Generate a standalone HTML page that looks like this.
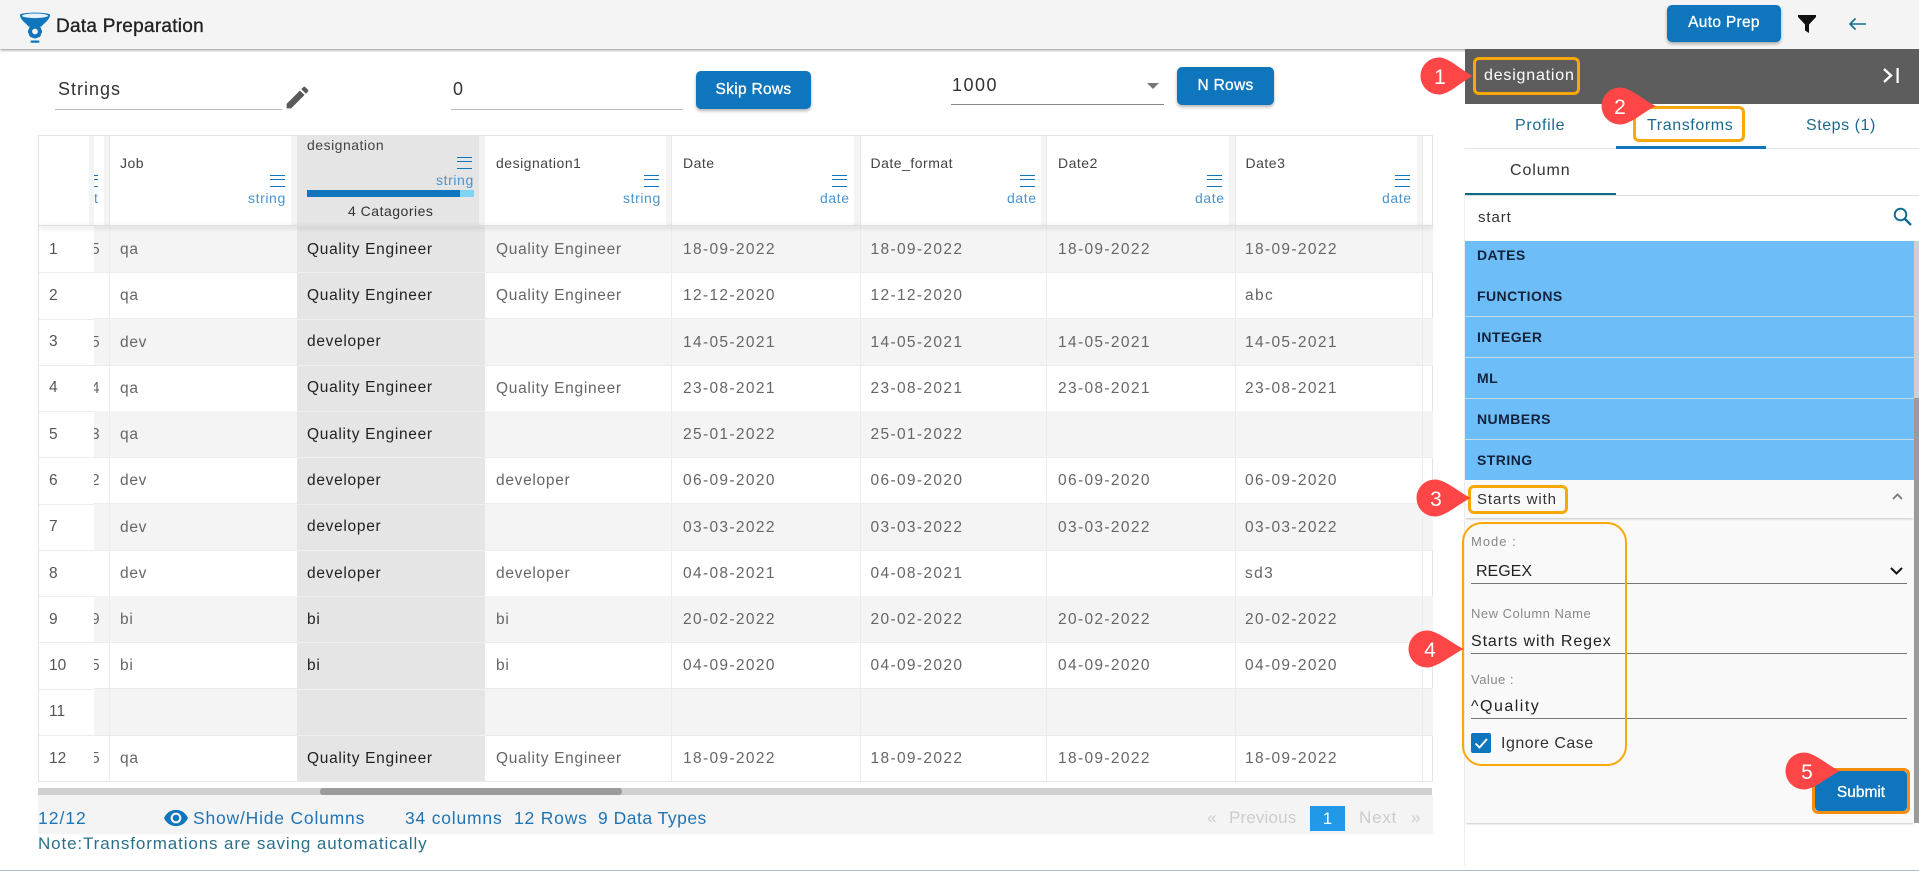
<!DOCTYPE html>
<html><head><meta charset="utf-8"><title>Data Preparation</title>
<style>
html,body{margin:0;padding:0;background:#fff}
body{width:1919px;height:871px;position:relative;overflow:hidden;font-family:"Liberation Sans",sans-serif;color:#333}
.a{position:absolute}
.t{position:absolute;white-space:nowrap;line-height:20px}
.btn{position:absolute;background:#0f75bc;color:#fff;border-radius:5px;text-align:center;font-weight:400;font-size:15.5px;letter-spacing:.3px;-webkit-text-stroke:.3px #fff;box-shadow:0 2px 3px rgba(0,0,0,.3)}
.r{position:absolute;left:94px;width:1339px;height:46px;border-bottom:1px solid #ececec;box-sizing:content-box}
.r.o{background:#f4f4f4}
.r i{position:absolute;top:0;width:1px;height:46px;background:#ececec}
.r b{position:absolute;font-weight:400;top:1px;line-height:46px;font-size:15.5px;letter-spacing:.7px;color:#666;white-space:nowrap}
.r b.d{letter-spacing:1.35px}
.r b.f{left:-3px;color:#666}
.c0{left:26px}.c2{left:402px}.c3{left:589px}.c4{left:776.5px}.c5{left:964px}.c6{left:1151px}
.idx{position:absolute;left:49px;font-size:15.5px;color:#555;line-height:20px}
.des{position:absolute;left:297px;width:188px;background:#e5e5e5}
.hstrip{position:absolute;top:136px;height:90px;background:#f4f4f4}
.hn{position:absolute;top:153px;font-size:14px;line-height:20px;color:#444;letter-spacing:.5px;white-space:nowrap}
.ty{position:absolute;top:188px;font-size:14px;line-height:20px;color:#4a94cf;letter-spacing:.6px;text-align:right;white-space:nowrap}
.m{position:absolute;width:15px;height:10px;border-top:1.3px solid #0f75bc;border-bottom:1.3px solid #0f75bc}
.m:after{content:"";position:absolute;left:0;right:0;top:3.7px;height:1.3px;background:#0f75bc}
.li{position:absolute;left:1465px;width:449px;background:#6cbdf8;height:40px;border-bottom:1px solid #c9dbe8}
.li span{position:absolute;left:12px;font-size:14px;font-weight:700;letter-spacing:.45px;color:#13223a;line-height:20px}
.lab{position:absolute;left:1471px;font-size:13px;color:#888;line-height:16px;letter-spacing:.5px;white-space:nowrap}
.val{position:absolute;left:1471px;font-size:16px;color:#222;line-height:20px;letter-spacing:.9px;white-space:nowrap}
.ul{position:absolute;left:1471px;width:436px;height:1.5px;background:#777}
.f{position:absolute;font-size:17.5px;line-height:22px;color:#1f74b5;letter-spacing:.8px;white-space:nowrap;top:807px}
.p{position:absolute;font-size:17px;line-height:22px;color:#ccc;letter-spacing:.8px;top:807px;white-space:nowrap}
.ob{position:absolute;border:3px solid #f9a80a;border-radius:6px;box-sizing:border-box}
.mk{position:absolute;width:60px;height:40px;overflow:visible}
.mk text{font-family:"Liberation Sans",sans-serif;font-size:21px;fill:#fff;text-anchor:middle}
.sep{position:absolute;left:39px;width:55px;height:1px;background:#ececec}
.ds{position:absolute;left:297px;width:188px;height:1px;background:#efefef}
.dt{position:absolute;left:307px;font-size:15.5px;letter-spacing:.7px;color:#222;line-height:20px;white-space:nowrap}
</style></head><body>

<!-- top header -->
<div class="a" style="left:0;top:0;width:1919px;height:49px;background:#f4f4f4;box-shadow:0 1px 3px rgba(0,0,0,.45)"></div>
<svg class="a" style="left:18px;top:11px" width="34" height="34" viewBox="0 0 34 34">
<path d="M2 3.5C2 9 8 12 10.500 15.500L23.500 15.500C26 12 32 9 32 3.500C28 1 6 1 2 3.500Z" fill="#0f75bc"/>
<ellipse cx="17" cy="4.800" rx="13" ry="2.300" fill="#e8f2fa"/>
<circle cx="17" cy="20.500" r="4.800" fill="none" stroke="#0f75bc" stroke-width="3.800"/>
<path d="M17 13.500v3M17 24.500v3M10 20.500h3M21 20.500h3M12 15.500l2 2M20 23.500l2 2M22 15.500l-2 2M14 23.500l-2 2" stroke="#0f75bc" stroke-width="2.400"/>
<rect x="12.500" y="29.500" width="9" height="2.300" rx="1" fill="#0f75bc"/>
</svg>
<div class="t" style="left:56px;top:17px;font-size:19px;letter-spacing:.27px;color:#222;-webkit-text-stroke:.35px #222">Data Preparation</div>
<div class="btn" style="left:1667px;top:5px;width:114px;height:37px;line-height:36px;">Auto Prep</div>
<svg class="a" style="left:1798px;top:15px" width="18" height="18" viewBox="0 0 18 18"><path d="M0 0H18V2L11 9.500V18L7 15.500V9.500L0 2Z" fill="#111"/></svg>
<svg class="a" style="left:1848px;top:17px" width="19" height="14" viewBox="0 0 19 14"><path d="M18 7H2M7.500 1.500L2 7L7.500 12.500" fill="none" stroke="#0f6f8f" stroke-width="1.600"/></svg>

<!-- controls -->
<div class="t" style="left:58px;top:79px;font-size:18px;letter-spacing:1px;color:#333">Strings</div>
<div class="a" style="left:55px;top:108.500px;width:227px;height:1px;background:#bbb"></div>
<svg class="a" style="left:283px;top:83px" width="29" height="29" viewBox="0 0 24 24"><path d="M3 17.250V21h3.750L17.810 9.940l-3.750-3.750L3 17.250zM20.710 7.040c.39-.39.39-1.020 0-1.410l-2.340-2.340c-.39-.39-1.020-.39-1.410 0l-1.830 1.830 3.750 3.750 1.830-1.830z" fill="#5a5a5a"/></svg>
<div class="t" style="left:453px;top:79px;font-size:18px;color:#333">0</div>
<div class="a" style="left:451px;top:108.500px;width:232px;height:1px;background:#bbb"></div>
<div class="btn" style="left:696px;top:71px;width:115px;height:38px;line-height:38px">Skip Rows</div>
<div class="t" style="left:952px;top:75px;font-size:18px;letter-spacing:1.500px;color:#333">1000</div>
<div class="a" style="left:951px;top:104px;width:213px;height:1px;background:#888"></div>
<svg class="a" style="left:1147px;top:83px" width="12" height="6" viewBox="0 0 12 6"><path d="M0 0H12L6 6Z" fill="#757575"/></svg>
<div class="btn" style="left:1177px;top:67px;width:97px;height:38px;line-height:38px">N Rows</div>

<!-- table frame -->
<div class="a" style="left:38px;top:135px;width:1395px;height:647px;box-sizing:border-box;border:1px solid #e4e4e4;border-bottom:0"></div>

<!-- rows -->
<div class="r o" style="top:226px"><b class="f">5</b><i style="left:15px"></i><b class="c0">qa</b><b class="c2">Quality Engineer</b><i style="left:577px"></i><b class="d c3">18-09-2022</b><i style="left:766px"></i><b class="d c4">18-09-2022</b><i style="left:952px"></i><b class="d c5">18-09-2022</b><i style="left:1141px"></i><b class="d c6">18-09-2022</b><i style="left:1328px"></i></div>
<div class="r" style="top:272.250px"><i style="left:15px"></i><b class="c0">qa</b><b class="c2">Quality Engineer</b><i style="left:577px"></i><b class="d c3">12-12-2020</b><i style="left:766px"></i><b class="d c4">12-12-2020</b><i style="left:952px"></i><i style="left:1141px"></i><b class="d c6">abc</b><i style="left:1328px"></i></div>
<div class="r o" style="top:318.500px"><b class="f">5</b><i style="left:15px"></i><b class="c0">dev</b><i style="left:577px"></i><b class="d c3">14-05-2021</b><i style="left:766px"></i><b class="d c4">14-05-2021</b><i style="left:952px"></i><b class="d c5">14-05-2021</b><i style="left:1141px"></i><b class="d c6">14-05-2021</b><i style="left:1328px"></i></div>
<div class="r" style="top:364.750px"><b class="f">4</b><i style="left:15px"></i><b class="c0">qa</b><b class="c2">Quality Engineer</b><i style="left:577px"></i><b class="d c3">23-08-2021</b><i style="left:766px"></i><b class="d c4">23-08-2021</b><i style="left:952px"></i><b class="d c5">23-08-2021</b><i style="left:1141px"></i><b class="d c6">23-08-2021</b><i style="left:1328px"></i></div>
<div class="r o" style="top:411px"><b class="f">3</b><i style="left:15px"></i><b class="c0">qa</b><i style="left:577px"></i><b class="d c3">25-01-2022</b><i style="left:766px"></i><b class="d c4">25-01-2022</b><i style="left:952px"></i><i style="left:1141px"></i><i style="left:1328px"></i></div>
<div class="r" style="top:457.250px"><b class="f">2</b><i style="left:15px"></i><b class="c0">dev</b><b class="c2">developer</b><i style="left:577px"></i><b class="d c3">06-09-2020</b><i style="left:766px"></i><b class="d c4">06-09-2020</b><i style="left:952px"></i><b class="d c5">06-09-2020</b><i style="left:1141px"></i><b class="d c6">06-09-2020</b><i style="left:1328px"></i></div>
<div class="r o" style="top:503.500px"><i style="left:15px"></i><b class="c0">dev</b><i style="left:577px"></i><b class="d c3">03-03-2022</b><i style="left:766px"></i><b class="d c4">03-03-2022</b><i style="left:952px"></i><b class="d c5">03-03-2022</b><i style="left:1141px"></i><b class="d c6">03-03-2022</b><i style="left:1328px"></i></div>
<div class="r" style="top:549.750px"><i style="left:15px"></i><b class="c0">dev</b><b class="c2">developer</b><i style="left:577px"></i><b class="d c3">04-08-2021</b><i style="left:766px"></i><b class="d c4">04-08-2021</b><i style="left:952px"></i><i style="left:1141px"></i><b class="d c6">sd3</b><i style="left:1328px"></i></div>
<div class="r o" style="top:596px"><b class="f">9</b><i style="left:15px"></i><b class="c0">bi</b><b class="c2">bi</b><i style="left:577px"></i><b class="d c3">20-02-2022</b><i style="left:766px"></i><b class="d c4">20-02-2022</b><i style="left:952px"></i><b class="d c5">20-02-2022</b><i style="left:1141px"></i><b class="d c6">20-02-2022</b><i style="left:1328px"></i></div>
<div class="r" style="top:642.250px"><b class="f">5</b><i style="left:15px"></i><b class="c0">bi</b><b class="c2">bi</b><i style="left:577px"></i><b class="d c3">04-09-2020</b><i style="left:766px"></i><b class="d c4">04-09-2020</b><i style="left:952px"></i><b class="d c5">04-09-2020</b><i style="left:1141px"></i><b class="d c6">04-09-2020</b><i style="left:1328px"></i></div>
<div class="r o" style="top:688.500px"><i style="left:15px"></i><i style="left:577px"></i><i style="left:766px"></i><i style="left:952px"></i><i style="left:1141px"></i><i style="left:1328px"></i></div>
<div class="r" style="top:734.750px"><b class="f">5</b><i style="left:15px"></i><b class="c0">qa</b><b class="c2">Quality Engineer</b><i style="left:577px"></i><b class="d c3">18-09-2022</b><i style="left:766px"></i><b class="d c4">18-09-2022</b><i style="left:952px"></i><b class="d c5">18-09-2022</b><i style="left:1141px"></i><b class="d c6">18-09-2022</b><i style="left:1328px"></i></div>
<div class="a" style="left:38px;top:781px;width:1395px;height:1px;background:#e8e8e8"></div>

<!-- index column cover -->
<div class="a" style="left:39px;top:226px;width:55px;height:555px;background:#fff"></div>
<div class="sep" style="top:272px"></div><div class="sep" style="top:318.500px"></div><div class="sep" style="top:364.500px"></div><div class="sep" style="top:411px"></div><div class="sep" style="top:457px"></div><div class="sep" style="top:503.500px"></div><div class="sep" style="top:549.500px"></div><div class="sep" style="top:596px"></div><div class="sep" style="top:642px"></div><div class="sep" style="top:688.500px"></div><div class="sep" style="top:734.500px"></div>
<div class="idx" style="top:240px">1</div><div class="idx" style="top:286px">2</div><div class="idx" style="top:332px">3</div><div class="idx" style="top:378px">4</div><div class="idx" style="top:425px">5</div><div class="idx" style="top:471px">6</div><div class="idx" style="top:517px">7</div><div class="idx" style="top:564px">8</div><div class="idx" style="top:610px">9</div><div class="idx" style="top:656px">10</div><div class="idx" style="top:702px">11</div><div class="idx" style="top:749px">12</div>

<!-- designation column -->
<div class="des" style="top:136px;height:645px"></div>
<div class="ds" style="top:272px"></div><div class="ds" style="top:318.500px"></div><div class="ds" style="top:364.500px"></div><div class="ds" style="top:411px"></div><div class="ds" style="top:457px"></div><div class="ds" style="top:503.500px"></div><div class="ds" style="top:549.500px"></div><div class="ds" style="top:596px"></div><div class="ds" style="top:642px"></div><div class="ds" style="top:688.500px"></div><div class="ds" style="top:734.500px"></div>
<div class="dt" style="top:240px">Quality Engineer</div>
<div class="dt" style="top:286px">Quality Engineer</div>
<div class="dt" style="top:332px">developer</div>
<div class="dt" style="top:378px">Quality Engineer</div>
<div class="dt" style="top:425px">Quality Engineer</div>
<div class="dt" style="top:471px">developer</div>
<div class="dt" style="top:517px">developer</div>
<div class="dt" style="top:564px">developer</div>
<div class="dt" style="top:610px">bi</div>
<div class="dt" style="top:656px">bi</div>
<div class="dt" style="top:749px">Quality Engineer</div>

<!-- header cells -->
<div class="a" style="left:39px;top:136px;width:1393px;height:90px;background:#fff"></div>
<div class="hstrip" style="left:89px;width:5px"></div>
<div class="hstrip" style="left:104px;width:5px"></div>
<div class="a" style="left:109px;top:136px;width:1px;height:90px;background:#e8e8e8"></div>
<div class="hstrip" style="left:291px;width:6px"></div>
<div class="a" style="left:297px;top:136px;width:188px;height:90px;background:#e5e5e5"></div>
<div class="hstrip" style="left:479px;width:6px;background:#f1f1f1"></div>
<div class="hstrip" style="left:666px;width:5px"></div>
<div class="hstrip" style="left:854px;width:6px"></div>
<div class="hstrip" style="left:1041px;width:5px"></div>
<div class="hstrip" style="left:1229px;width:6px"></div>
<div class="hstrip" style="left:1417px;width:5px"></div>
<div class="a" style="left:671px;top:136px;width:1px;height:90px;background:#e8e8e8"></div>
<div class="a" style="left:860px;top:136px;width:1px;height:90px;background:#e8e8e8"></div>
<div class="a" style="left:1046px;top:136px;width:1px;height:90px;background:#e8e8e8"></div>
<div class="a" style="left:1235px;top:136px;width:1px;height:90px;background:#e8e8e8"></div>
<div class="a" style="left:1422px;top:136px;width:1px;height:90px;background:#e8e8e8"></div>
<!-- clipped col -->
<div class="a" style="left:94px;top:174.500px;width:3.500px;height:10px;border-top:1.300px solid #0f75bc;border-bottom:1.300px solid #0f75bc"></div>
<div class="a" style="left:94px;top:179px;width:3.500px;height:1.300px;background:#0f75bc"></div>
<div class="t" style="left:94px;top:188px;font-size:14px;color:#4a94cf">t</div>

<div class="hn" style="left:120px">Job</div>
<div class="m" style="left:270px;top:174.500px"></div>
<div class="ty" style="left:248px">string</div>

<div class="hn" style="left:307px;top:135px">designation</div>
<div class="m" style="left:457px;top:156.500px"></div>
<div class="ty" style="left:436px;top:170px">string</div>
<div class="a" style="left:307px;top:190px;width:153px;height:7px;background:#0f75bc"></div>
<div class="a" style="left:460px;top:190px;width:14px;height:7px;background:#7fd3f7"></div>
<div class="t" style="left:348px;top:201px;font-size:14px;letter-spacing:.5px;color:#333">4 Catagories</div>

<div class="hn" style="left:496px">designation1</div>
<div class="m" style="left:644px;top:174.500px"></div>
<div class="ty" style="left:623px">string</div>

<div class="hn" style="left:683px">Date</div>
<div class="m" style="left:832px;top:174.500px"></div>
<div class="ty" style="left:820px">date</div>

<div class="hn" style="left:870.500px">Date_format</div>
<div class="m" style="left:1019.500px;top:174.500px"></div>
<div class="ty" style="left:1007px">date</div>

<div class="hn" style="left:1058px">Date2</div>
<div class="m" style="left:1207px;top:174.500px"></div>
<div class="ty" style="left:1195px">date</div>

<div class="hn" style="left:1245.500px">Date3</div>
<div class="m" style="left:1395px;top:174.500px"></div>
<div class="ty" style="left:1382px">date</div>

<div class="a" style="left:39px;top:225px;width:1394px;height:1px;background:#ddd;box-shadow:0 2px 4px rgba(0,0,0,.28)"></div>

<!-- scrollbar -->
<div class="a" style="left:38px;top:788px;width:1394px;height:7px;background:#d0d0d0"></div>
<div class="a" style="left:320px;top:788px;width:302px;height:7px;background:#9b9b9b;border-radius:3px"></div>

<!-- footer -->
<div class="a" style="left:38px;top:795px;width:1395px;height:39px;background:#f4f4f4"></div>
<div class="f" style="left:38px;letter-spacing:1px">12/12</div>
<svg class="a" style="left:163px;top:805px" width="26" height="26" viewBox="0 0 24 24"><path d="M12 4.500C7 4.500 2.730 7.610 1 12c1.730 4.390 6 7.500 11 7.500s9.270-3.110 11-7.500c-1.730-4.390-6-7.500-11-7.500zM12 17c-2.760 0-5-2.240-5-5s2.240-5 5-5 5 2.240 5 5-2.240 5-5 5zm0-8c-1.660 0-3 1.340-3 3s1.340 3 3 3 3-1.340 3-3-1.340-3-3-3z" fill="#0f75bc"/></svg>
<div class="f" style="left:193px">Show/Hide Columns</div>
<div class="f" style="left:405px">34 columns</div>
<div class="f" style="left:514px">12 Rows</div>
<div class="f" style="left:598px;letter-spacing:.5px">9 Data Types</div>
<div class="p" style="left:1207px">«</div>
<div class="p" style="left:1229px;letter-spacing:.15px">Previous</div>
<div class="a" style="left:1310px;top:806px;width:35px;height:25px;background:#2299e8;color:#fff;text-align:center;line-height:25px;font-size:17px">1</div>
<div class="p" style="left:1359px">Next</div>
<div class="p" style="left:1411px">»</div>
<div class="t" style="left:38px;top:833px;font-size:17px;line-height:22px;letter-spacing:.88px;color:#2b6f8a">Note:Transformations are saving automatically</div>
<div class="a" style="left:0;top:870px;width:1919px;height:1px;background:#a3bfbf"></div>

<!-- right panel -->
<div class="a" style="left:1464px;top:195px;width:1px;height:671px;background:#eee"></div>
<div class="a" style="left:1465px;top:49px;width:454px;height:55px;background:#5d5d5d"></div>
<div class="t" style="left:1484px;top:66px;font-size:16px;letter-spacing:.8px;color:#fff">designation</div>
<svg class="a" style="left:1882px;top:67px" width="18" height="17" viewBox="0 0 18 17"><path d="M2 2L9 8.500L2 15" fill="none" stroke="#fff" stroke-width="2.400"/><rect x="14.500" y="1" width="2.200" height="15" fill="#fff"/></svg>
<div class="t" style="left:1515px;top:116px;font-size:16px;letter-spacing:.7px;color:#1d6a8c">Profile</div>
<div class="t" style="left:1647px;top:116px;font-size:16px;letter-spacing:.6px;color:#1d6a8c">Transforms</div>
<div class="t" style="left:1806px;top:116px;font-size:16px;letter-spacing:.55px;color:#1d6a8c">Steps (1)</div>
<div class="a" style="left:1465px;top:148px;width:454px;height:1px;background:#e5e5e5"></div>
<div class="a" style="left:1615.500px;top:146px;width:150.500px;height:3px;background:#0f75bc"></div>
<div class="t" style="left:1510px;top:161px;font-size:16px;letter-spacing:.9px;color:#333">Column</div>
<div class="a" style="left:1465px;top:194.500px;width:454px;height:1px;background:#ddd"></div>
<div class="a" style="left:1465px;top:193px;width:150.500px;height:2px;background:#0d6a8a"></div>
<div class="t" style="left:1478px;top:208px;font-size:15px;letter-spacing:.9px;color:#333">start</div>
<svg class="a" style="left:1893px;top:207px" width="19" height="19" viewBox="0 0 19 19"><circle cx="7.500" cy="7.500" r="5.800" fill="none" stroke="#0d6a8a" stroke-width="1.900"/><path d="M12 12L18 18" stroke="#0d6a8a" stroke-width="2.300"/></svg>

<div class="li" style="top:241px;height:33.500px"><span style="top:4px">DATES</span></div>
<div class="li" style="top:275px;height:40.500px"><span style="top:11px">FUNCTIONS</span></div>
<div class="li" style="top:316.500px;height:40px"><span style="top:10.500px">INTEGER</span></div>
<div class="li" style="top:357.500px;height:40px"><span style="top:10.500px">ML</span></div>
<div class="li" style="top:398.500px;height:40px"><span style="top:10.500px">NUMBERS</span></div>
<div class="li" style="top:439.500px;height:40px"><span style="top:10.500px">STRING</span></div>
<div class="a" style="left:1914px;top:241px;width:5px;height:157px;background:#cfcfcf"></div>
<div class="a" style="left:1914px;top:398px;width:5px;height:425px;background:#9b9b9b"></div>

<div class="a" style="left:1465px;top:518px;width:449px;height:305px;background:#f9f9f9;box-shadow:0 2px 2px -1px rgba(0,0,0,.2)"></div>
<div class="a" style="left:1465px;top:480px;width:449px;height:38px;background:#f9f9f9;box-shadow:0 2px 2px -1px rgba(0,0,0,.22)"></div>
<div class="t" style="left:1477px;top:490px;font-size:15px;letter-spacing:.9px;color:#333">Starts with</div>
<svg class="a" style="left:1892px;top:493px" width="11" height="7" viewBox="0 0 11 7"><path d="M1 6L5.500 1.500L10 6" fill="none" stroke="#777" stroke-width="1.800"/></svg>

<div class="lab" style="left:1471px;top:534px;letter-spacing:1px">Mode :</div>
<div class="val" style="left:1476px;top:562px;letter-spacing:0">REGEX</div>
<svg class="a" style="left:1890px;top:567px" width="13" height="8" viewBox="0 0 13 8"><path d="M1 1L6.500 6.500L12 1" fill="none" stroke="#111" stroke-width="2"/></svg>
<div class="ul" style="top:582.500px"></div>
<div class="lab" style="top:606px">New Column Name</div>
<div class="val" style="top:632px">Starts with Regex</div>
<div class="ul" style="top:652.500px"></div>
<div class="lab" style="top:672px">Value :</div>
<div class="val" style="top:697px;letter-spacing:1.500px">^Quality</div>
<div class="ul" style="top:717.500px"></div>
<div class="a" style="left:1471px;top:733px;width:20px;height:20px;background:#0f75bc;border-radius:2px"></div>
<svg class="a" style="left:1471px;top:733px" width="20" height="20" viewBox="0 0 20 20"><path d="M4.500 10.500L8.500 14.500L16 6" fill="none" stroke="#fff" stroke-width="1.800"/></svg>
<div class="t" style="left:1501px;top:734px;font-size:16px;letter-spacing:.5px;color:#333">Ignore Case</div>

<div class="a" style="left:1815px;top:771px;width:92px;height:40px;background:#0f75bc;border-radius:4px"></div>
<div class="a" style="left:1815px;top:783px;width:92px;text-align:center;color:#fff;font-size:15.500px;-webkit-text-stroke:.3px #fff;line-height:20px">Submit</div>

<!-- annotations -->
<div class="ob" style="left:1473px;top:57px;width:107px;height:38px"></div>
<div class="ob" style="left:1633px;top:106px;width:112px;height:36px"></div>
<div class="ob" style="left:1468px;top:485px;width:100px;height:29px"></div>
<div class="a" style="left:1461.500px;top:521.500px;width:165px;height:244.500px;border:2px solid #f9a80a;border-radius:20px;box-sizing:border-box"></div>
<div class="ob" style="left:1812px;top:768px;width:98px;height:46px;border-color:#f58e0f"></div>

<svg class="mk" style="left:1439px;top:76px" viewBox="0 0 60 40"><path d="M34 0C24 4 11 18.500 0 18.500A18.500 18.500 0 0 1 0-18.500C11-18.500 24-4 34 0Z" fill="#ff4646"/><text x="1" y="8">1</text></svg>
<svg class="mk" style="left:1620px;top:105.500px" viewBox="0 0 60 40"><path d="M36 0C26 4 11 18.500 0 18.500A18.500 18.500 0 0 1 0-18.500C11-18.500 26-4 36 0Z" fill="#ff4646"/><text x="0" y="8">2</text></svg>
<svg class="mk" style="left:1435px;top:497.500px" viewBox="0 0 60 40"><path d="M36 0C26 4 11 18.500 0 18.500A18.500 18.500 0 0 1 0-18.500C11-18.500 26-4 36 0Z" fill="#ff4646"/><text x="1" y="8">3</text></svg>
<svg class="mk" style="left:1426.500px;top:648.500px" viewBox="0 0 60 40"><path d="M37 0C27 4 11 18.500 0 18.500A18.500 18.500 0 0 1 0-18.500C11-18.500 27-4 37 0Z" fill="#ff4646"/><text x="3" y="8">4</text></svg>
<svg class="mk" style="left:1804px;top:770.500px" viewBox="0 0 60 40"><path d="M36 0C26 4 11 18.500 0 18.500A18.500 18.500 0 0 1 0-18.500C11-18.500 26-4 36 0Z" fill="#ff4646"/><text x="3" y="8">5</text></svg>
</body></html>
